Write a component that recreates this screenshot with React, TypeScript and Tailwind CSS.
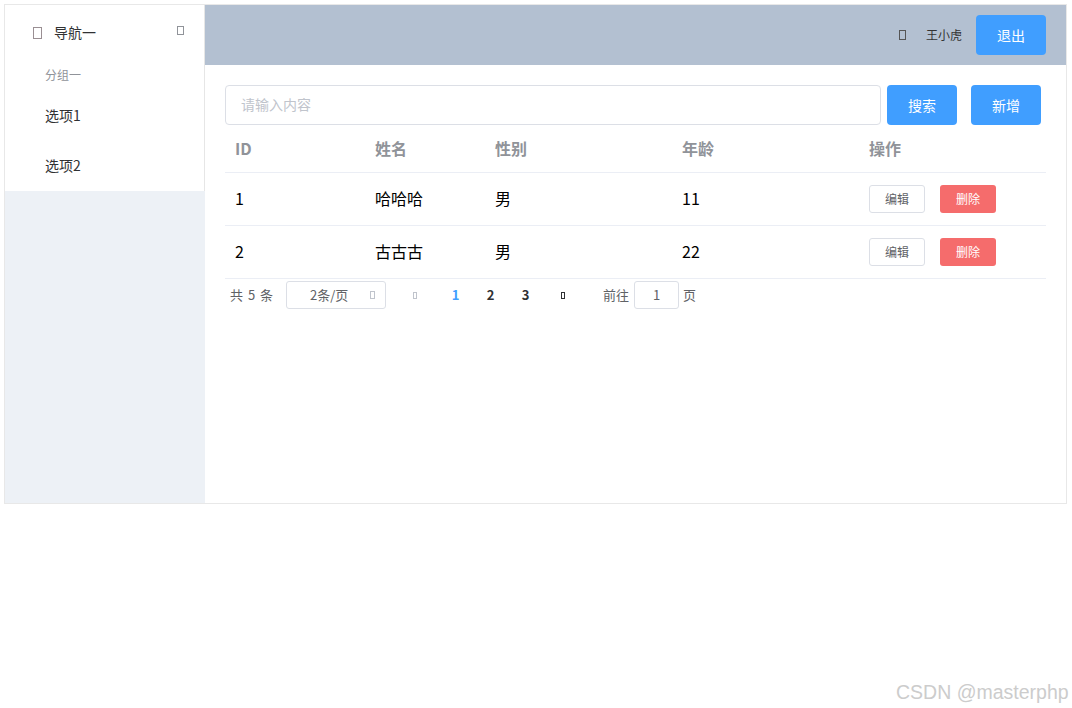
import React from "react";

const Tofu = ({ cls }: { cls: string }) => <span className={`inline-block border ${cls}`} />;

export default function App() {
  const rows = [
    { id: "1", name: "哈哈哈", sex: "男", age: "11" },
    { id: "2", name: "古古古", sex: "男", age: "22" },
  ];
  const font = { fontFamily: '"Noto Sans CJK SC", "Liberation Sans", sans-serif' };
  return (
    <div className="relative w-[1072px] h-[708px] bg-white overflow-hidden" style={font}>
      <div className="ml-[4px] mt-[4px] w-[1063px] h-[500px] border border-[#e8e8e8] flex">
        {/* aside */}
        <div className="w-[200px] h-full bg-[#edf1f6] flex flex-col">
          <div className="bg-white border-r border-[#e6e6e6]">
            <div className="h-[56px] flex items-center pl-[28px] pr-[20px]">
              <Tofu cls="w-[9px] h-[12px] border-[#9a8f93]" />
              <span className="ml-[12px] text-[14px] text-[#303133] pb-[2px]">导航一</span>
              <span className="flex-1" />
              <Tofu cls="w-[7px] h-[9px] border-[#909399] mb-[6px]" />
            </div>
            <div className="h-[30px] flex items-center pl-[40px] text-[12px] text-[#909399] pb-[2px]">分组一</div>
            <div className="h-[50px] flex items-center pl-[40px] text-[14px] text-[#303133] pb-[2px]">选项1</div>
            <div className="h-[50px] flex items-center pl-[40px] text-[14px] text-[#303133] pb-[2px]">选项2</div>
          </div>
        </div>
        {/* right */}
        <div className="flex-1 flex flex-col">
          <div className="h-[60px] bg-[#b3c0d1] flex items-center justify-end pr-[20px]">
            <Tofu cls="w-[7px] h-[10px] border-[#555]" />
            <span className="ml-[20px] text-[12px] text-[#333]">王小虎</span>
            <button className="ml-[14px] w-[70px] h-[40px] bg-[#409eff] text-white text-[14px] rounded-[4px]">退出</button>
          </div>
          <div className="p-[20px]">
            <div className="flex">
              <div className="w-[656px] h-[40px] border border-[#dcdfe6] rounded-[4px] px-[15px] flex items-center text-[14px] text-[#c0c4cc] pb-[2px]">
                请输入内容
              </div>
              <button className="ml-[6px] w-[70px] h-[40px] bg-[#409eff] text-white text-[14px] rounded-[4px]">搜索</button>
              <button className="ml-[14px] w-[70px] h-[40px] bg-[#409eff] text-white text-[14px] rounded-[4px]">新增</button>
            </div>
            <div className="w-[821px]">
              <div className="h-[48px] flex items-center border-b border-[#ebeef5] text-[16px] font-bold text-[#909399]">
                <div className="w-[140px] pl-[10px] pb-[2px]">ID</div>
                <div className="w-[120px] pl-[10px] pb-[2px]">姓名</div>
                <div className="w-[187px] pl-[10px] pb-[2px]">性别</div>
                <div className="w-[187px] pl-[10px] pb-[2px]">年龄</div>
                <div className="w-[187px] pl-[10px] pb-[2px]">操作</div>
              </div>
              {rows.map((r) => (
                <div key={r.id} className="h-[53px] flex items-center border-b border-[#ebeef5] text-[16px] text-black">
                  <div className="w-[140px] pl-[10px] pb-[2px]">{r.id}</div>
                  <div className="w-[120px] pl-[10px] pb-[2px]">{r.name}</div>
                  <div className="w-[187px] pl-[10px] pb-[2px]">{r.sex}</div>
                  <div className="w-[187px] pl-[10px] pb-[2px]">{r.age}</div>
                  <div className="w-[187px] pl-[10px] flex items-center">
                    <button className="w-[56px] h-[28px] border border-[#dcdfe6] rounded-[3px] text-[12px] text-[#606266] bg-white">编辑</button>
                    <button className="ml-[15px] w-[56px] h-[28px] rounded-[3px] text-[12px] text-white bg-[#f56c6c]">删除</button>
                  </div>
                </div>
              ))}
              <div className="mt-[2px] h-[28px] flex items-center pl-[5px] text-[13px] text-[#606266]">
                <span className="w-[56px] [word-spacing:2px]">共 5 条</span>
                <div className="w-[100px] h-[28px] border border-[#dcdfe6] rounded-[3px] flex items-center pl-[23px] pr-[10px]">
                  <span className="flex-1">2条/页</span>
                  <Tofu cls="w-[5px] h-[8px] border-[#c0c4cc]" />
                </div>
                <div className="ml-[14px] w-[30px] flex justify-center">
                  <Tofu cls="w-[4px] h-[7px] border-[#c0c4cc]" />
                </div>
                <div className="ml-[8px] flex font-bold text-[13px]">
                  <span className="w-[35px] text-center text-[#409eff]">1</span>
                  <span className="w-[35px] text-center text-[#303133]">2</span>
                  <span className="w-[35px] text-center text-[#303133]">3</span>
                </div>
                <div className="ml-[5px] w-[30px] flex justify-center">
                  <Tofu cls="w-[4px] h-[7px] border-[#303133]" />
                </div>
                <span className="ml-[25px]">前往</span>
                <div className="ml-[5px] w-[45px] h-[28px] border border-[#dcdfe6] rounded-[3px] flex items-center justify-center">1</div>
                <span className="ml-[4px]">页</span>
              </div>
            </div>
          </div>
        </div>
      </div>
      <div
        className="absolute left-[896px] top-[678px] text-[19.5px] text-[#cccccc]"
        style={{ fontFamily: '"Liberation Sans", Arial, sans-serif' }}
      >
        CSDN @masterphp
      </div>
    </div>
  );
}
